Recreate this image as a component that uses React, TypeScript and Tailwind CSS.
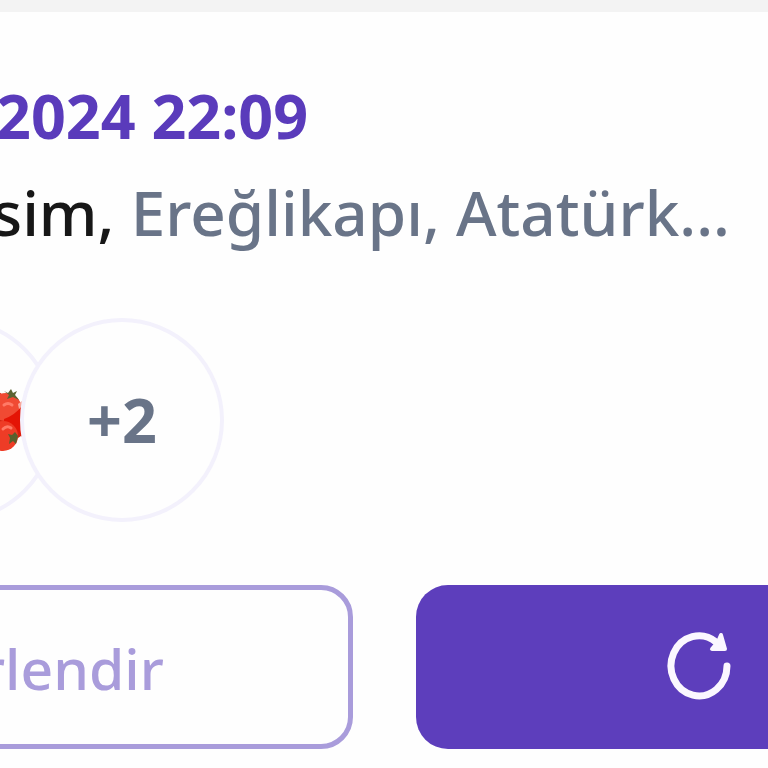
function Tomatoes() {
  return (
    <svg viewBox="0 0 40 64" className="h-16 w-10" aria-hidden="true">
      <path d="M0 3 Q12 0 20 8 L36 17 L37 48 L22 58 Q12 66 0 64 Z" fill="#d3230f" />
      <ellipse cx="22" cy="19" rx="15" ry="14" fill="#f04a33" />
      <path d="M20 31 Q31 27 38 18 V49 Q31 36 20 33 Z" fill="#e41405" />
      <ellipse cx="19" cy="48" rx="15" ry="15" fill="#ee3c26" />
      <path d="M19 41 q4 -4 8 -1" stroke="#ff7a66" strokeWidth="3" fill="none" strokeLinecap="round" />
      <path d="M20 17 q4 -3 8 0" stroke="#ff7a66" strokeWidth="3" fill="none" strokeLinecap="round" />
      <path d="M34 16 L38 13 V18 L35 21 Z" fill="#f8a79b" />
      <path d="M20 3 l4 2 l3 -4 l2 4 l4 -2 l-2 4 l4 5 l-6 -3 l-6 2 l2 -4 Z" fill="#5c6332" />
      <path d="M31 44 l3 4 l-2 8 l-3 -3 l-4 3 l1 -6 l-2 -4 l4 1 Z" fill="#59602d" />
    </svg>
  );
}

function RepeatIcon() {
  return (
    <svg viewBox="0 0 64 68" className="h-17 w-16 overflow-visible" fill="none" stroke="#fbf7ff" strokeLinecap="round" strokeLinejoin="round" aria-hidden="true">
      <path d="M59 33 A28 30 0 1 1 48 9" strokeWidth="7" />
      <path d="M44 16 L57 16 L53 2 L50 9 Z" fill="#fbf7ff" strokeWidth="4" />
    </svg>
  );
}

export default function App() {
  return (
    <div className="min-h-screen overflow-x-hidden bg-[#fefefe] font-['Noto_Sans','Open_Sans',sans-serif]">
      <div className="h-3 bg-[#f3f3f3]" />

      <article className="overflow-hidden pt-14">
        <header className="whitespace-nowrap leading-[96px]">
          <p className="-ml-1 text-[61px] leading-[96px] font-bold text-[#5a3bbb]">2024 22:09</p>
          <p className="-ml-2 text-[62px] leading-[96px] font-medium text-[#697488]">
            <span className="text-[#171717]">sim,</span> Ereğlikapı, Atatürk...
          </p>
        </header>

        <div className="mt-[58px] -ml-37 flex items-center">
          <div className="flex size-51 shrink-0 items-center justify-end rounded-full border-4 border-[#f3f1fc] pr-7">
            <Tomatoes />
          </div>
          <div className="-ml-9 flex size-51 shrink-0 items-center justify-center rounded-full border-4 border-[#f3f1fc] bg-[#fefefe] text-[61px] font-bold text-[#697488]">
            +2
          </div>
        </div>

        <div className="mt-[63px] -ml-8 flex gap-[63px]">
          <button type="button" className="h-41 w-[385px] shrink-0 rounded-[32px] border-[5px] border-[#a99cdb] pt-1 pl-2 text-left text-[57px] font-medium text-[#a99cdb]">
            rlendir
          </button>
          <button type="button" aria-label="Tekrarla" className="-mr-8 flex h-41 flex-1 items-center rounded-l-[32px] bg-[#5d3ebc] pl-63">
            <RepeatIcon />
          </button>
        </div>
      </article>
    </div>
  );
}
